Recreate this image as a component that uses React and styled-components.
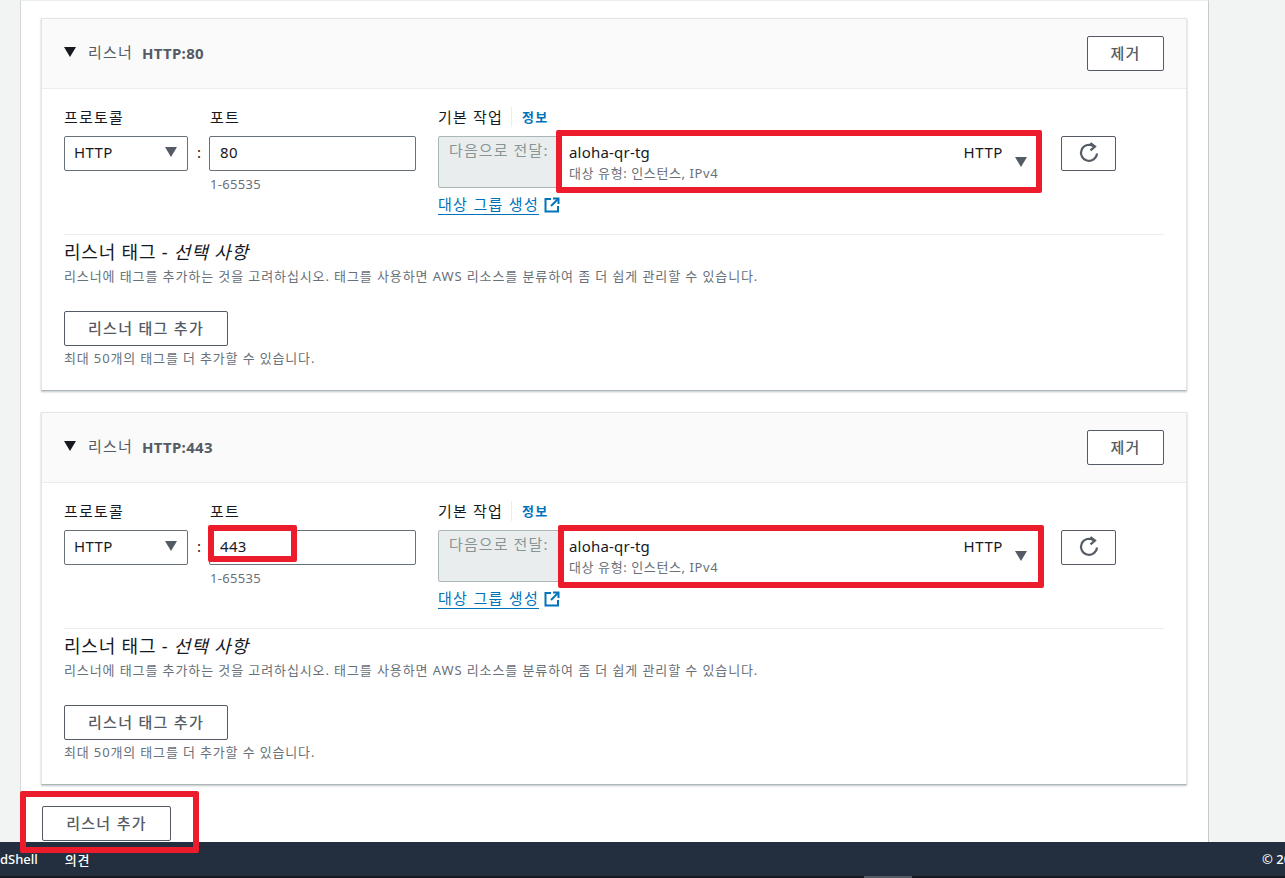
import React from 'react';
import styled, { createGlobalStyle } from 'styled-components';

const GlobalStyle = createGlobalStyle`
  html, body {
    margin: 0;
    padding: 0;
    background: #f2f3f3;
    overflow: hidden;
  }
  body {
    font-family: "Noto Sans", "Noto Sans CJK KR", sans-serif;
    font-size: 15px;
    color: #16191f;
  }
`;

const Page = styled.div`
  position: relative;
  width: 1285px;
  height: 878px;
  display: flex;
  flex-direction: column;
  overflow: hidden;
`;

const Panel = styled.main`
  width: 1189px;
  height: 842px;
  box-sizing: border-box;
  margin-left: 20px;
  padding: 17px 20px 0 20px;
  background: #fff;
  border-left: 1px solid #d5d8d8;
  border-right: 1px solid #c6caca;
  border-top: 1px solid #eaeded;
  flex: none;
`;

const Card = styled.section`
  width: 1146px;
  height: 373px;
  box-sizing: border-box;
  margin-bottom: 21px;
  background: #fff;
  border: 1px solid #e4e7e7;
  border-bottom: 1px solid #aab7b8;
  box-shadow: 0 1px 2px rgba(0, 28, 36, 0.25);
  display: flex;
  flex-direction: column;
`;

const CardHeader = styled.header`
  height: 70px;
  flex: none;
  box-sizing: border-box;
  padding: 0 22px;
  background: #fafafa;
  border-bottom: 1px solid #eaeded;
  display: flex;
  align-items: center;
`;

const Caret = styled.span`
  width: 0;
  height: 0;
  border-left: 6px solid transparent;
  border-right: 6px solid transparent;
  border-top: 10px solid ${(p) => p.$color || '#16191f'};
  flex: none;
`;

const HeaderCaret = styled(Caret)`
  position: relative;
  top: -2px;
`;

const HeaderLabel = styled.span`
  margin-left: 12px;
  color: #545b64;
  font-size: 15px;
  letter-spacing: 1.2px;
  position: relative;
  top: -2px;
`;

const HeaderValue = styled.strong`
  margin-left: 9px;
  color: #545b64;
  font-size: 15px;
  font-weight: 700;
  letter-spacing: 0.3px;
  position: relative;
  top: -1px;
`;

const Button = styled.button`
  height: 35px;
  width: ${(p) => p.$width}px;
  box-sizing: border-box;
  padding: 0 0 2px;
  background: #fff;
  border: 1px solid #545b64;
  border-radius: 2px;
  color: #545b64;
  font-family: inherit;
  font-size: 15px;
  font-weight: 500;
  letter-spacing: 1.3px;
  display: flex;
  align-items: center;
  justify-content: center;
  flex: none;
`;

const RemoveButton = styled(Button)`
  margin-left: auto;
`;

const AddListenerButton = styled(Button)`
  margin-left: 1px;
`;

const CardBody = styled.div`
  flex: 1;
  padding: 18px 22px 0;
`;

const FormRow = styled.div`
  height: 128px;
  box-sizing: border-box;
  display: flex;
  align-items: flex-start;
  border-bottom: 1px solid #eaeded;
`;

const Field = styled.div`
  width: ${(p) => p.$width}px;
  flex: none;
  margin-right: ${(p) => p.$gap || 0}px;
`;

const FieldLabel = styled.div`
  height: 20px;
  line-height: 20px;
  margin-bottom: 9px;
  padding-left: ${(p) => p.$indent || 0}px;
  font-size: 15px;
  letter-spacing: 1.2px;
  color: #16191f;
  display: flex;
  align-items: center;
`;

const InfoLink = styled.span`
  margin-left: 8px;
  padding-left: 10px;
  border-left: 1px solid #eaeded;
  color: #0073bb;
  font-size: 13px;
  font-weight: 700;
  letter-spacing: 1.2px;
`;

const SelectBox = styled.div`
  height: 35px;
  box-sizing: border-box;
  padding: 0 10px 3px 9px;
  border: 1px solid #687078;
  border-radius: 2px;
  display: flex;
  align-items: center;
  justify-content: space-between;
  font-size: 15px;
  letter-spacing: 0.4px;
`;

const Colon = styled.div`
  width: 21px;
  flex: none;
  margin-top: 29px;
  height: 35px;
  line-height: 33px;
  padding-left: 1px;
  box-sizing: border-box;
  text-align: center;
`;

const PortInput = styled.div`
  height: 35px;
  box-sizing: border-box;
  padding-left: 10px;
  border: 1px solid #687078;
  border-radius: 2px;
  line-height: 31px;
  font-size: 15px;
  letter-spacing: 0.3px;
  position: relative;
`;

const Hint = styled.div`
  margin-top: ${(p) => p.$top || 5}px;
  padding-left: ${(p) => p.$indent || 0}px;
  font-size: 13px;
  line-height: 16px;
  letter-spacing: ${(p) => p.$spacing || 0.3}px;
  color: #687078;
`;

const ActionRow = styled.div`
  display: flex;
  position: relative;
`;

const ForwardLabel = styled.div`
  width: 122px;
  height: 52px;
  box-sizing: border-box;
  padding: 1px 0 0 10px;
  background: #eaeded;
  border: 1px solid #aab7b8;
  border-radius: 2px 0 0 2px;
  color: #879596;
  font-size: 15px;
  letter-spacing: 1.1px;
  line-height: 24px;
  white-space: nowrap;
  flex: none;
  overflow: hidden;
`;

const TargetSelect = styled.div`
  width: 472px;
  height: 52px;
  box-sizing: border-box;
  padding: 4px 5px 0 9px;
  display: flex;
  align-items: flex-start;
  flex: none;
`;

const TargetText = styled.div`
  flex: 1;
`;

const TargetName = styled.div`
  line-height: 24px;
  font-size: 15px;
  letter-spacing: 0.2px;
`;

const TargetMeta = styled.div`
  line-height: 16px;
  margin-top: 1px;
  font-size: 13px;
  letter-spacing: 0.6px;
  color: #687078;
`;

const TargetProtocol = styled.div`
  line-height: 24px;
  margin-right: 12px;
  font-size: 15px;
  letter-spacing: 0.6px;
`;

const TargetCaret = styled(Caret)`
  margin-top: 17px;
`;

const CreateLink = styled.div`
  margin-top: 6px;
  display: flex;
  align-items: center;
  color: #0073bb;
  font-size: 15px;
  letter-spacing: 1.3px;
  line-height: 20px;
`;

const LinkText = styled.span`
  border-bottom: 1px solid #0073bb;
  margin-right: 5px;
`;

const RefreshWrap = styled.div`
  margin-top: 29px;
  margin-left: 19px;
`;

const TagTitle = styled.h3`
  margin: 6px 0 0;
  font-size: 18px;
  line-height: 22px;
  font-weight: 400;
  letter-spacing: 0.8px;
  color: #16191f;

  em {
    font-style: italic;
  }
`;

const TagDescription = styled.p`
  margin: 5px 0 0;
  font-size: 13px;
  line-height: 16px;
  letter-spacing: 0.9px;
  color: #687078;
`;

const TagButtonWrap = styled.div`
  margin-top: 27px;
`;

const Highlight = styled.div`
  position: absolute;
  top: ${(p) => p.$top}px;
  left: ${(p) => p.$left}px;
  width: ${(p) => p.$width}px;
  height: ${(p) => p.$height}px;
  box-sizing: border-box;
  border: 6px solid #ec1c2c;
  border-radius: 2px;
  z-index: 2;
  pointer-events: none;
`;

const Footer = styled.footer`
  height: 34px;
  flex: none;
  background: #232f3e;
  color: #fff;
  font-size: 13px;
  font-weight: 500;
  display: flex;
  align-items: center;
  white-space: nowrap;
  overflow: hidden;
`;

const FooterFeedback = styled.span`
  margin-left: 27px;
  letter-spacing: 0.6px;
`;

const FooterCopy = styled.span`
  margin-left: auto;
  width: 23px;
  overflow: hidden;
`;

const BottomStrip = styled.div`
  height: 2px;
  flex: none;
  background: #16191f;
  padding-left: 864px;
`;

const ScrollThumb = styled.div`
  width: 48px;
  height: 2px;
  background: #545b64;
`;

const RefreshIcon = () => (
  <svg width="22" height="22" viewBox="0 0 22 22" fill="none" stroke="#545b64" strokeWidth="2.2">
    <path d="M15.8 4.4A8 8 0 1 0 19 11.5" />
    <path d="M12.5 1 L17 4.6 L12.5 8.4" />
  </svg>
);

const ExternalIcon = () => (
  <svg width="16" height="16" viewBox="0 0 16 16" fill="none" stroke="#0073bb" strokeWidth="2">
    <path d="M7 2H1.5v12.5H14V9" />
    <path d="M9 1.5h5.5V7" />
    <path d="M14 2L7 9" />
  </svg>
);

const Listener = ({ port, highlightPort, actionHighlight }) => (
  <Card>
    <CardHeader>
      <HeaderCaret />
      <HeaderLabel>리스너</HeaderLabel>
      <HeaderValue>HTTP:{port}</HeaderValue>
      <RemoveButton $width={77}>제거</RemoveButton>
    </CardHeader>
    <CardBody>
      <FormRow>
        <Field $width={124}>
          <FieldLabel>프로토콜</FieldLabel>
          <SelectBox>
            HTTP
            <Caret $color="#545b64" />
          </SelectBox>
        </Field>
        <Colon>:</Colon>
        <Field $width={207} $gap={22}>
          <FieldLabel $indent={1}>포트</FieldLabel>
          <PortInput>
            {port}
            {highlightPort && <Highlight $top={-6} $left={-2} $width={89} $height={37} />}
          </PortInput>
          <Hint $indent={1}>1-65535</Hint>
        </Field>
        <Field $width={604}>
          <FieldLabel>
            기본 작업
            <InfoLink>정보</InfoLink>
          </FieldLabel>
          <ActionRow>
            <ForwardLabel>다음으로 전달:</ForwardLabel>
            <TargetSelect>
              <TargetText>
                <TargetName>aloha-qr-tg</TargetName>
                <TargetMeta>대상 유형: 인스턴스, IPv4</TargetMeta>
              </TargetText>
              <TargetProtocol>HTTP</TargetProtocol>
              <TargetCaret $color="#545b64" />
            </TargetSelect>
            <Highlight
              $top={actionHighlight.top}
              $left={actionHighlight.left}
              $width={486}
              $height={63}
            />
          </ActionRow>
          <CreateLink>
            <LinkText>대상 그룹 생성</LinkText>
            <ExternalIcon />
          </CreateLink>
        </Field>
        <RefreshWrap>
          <Button $width={55}>
            <RefreshIcon />
          </Button>
        </RefreshWrap>
      </FormRow>
      <TagTitle>
        리스너 태그 - <em>선택 사항</em>
      </TagTitle>
      <TagDescription>
        리스너에 태그를 추가하는 것을 고려하십시오. 태그를 사용하면 AWS 리소스를 분류하여 좀 더 쉽게 관리할 수 있습니다.
      </TagDescription>
      <TagButtonWrap>
        <Button $width={164}>리스너 태그 추가</Button>
      </TagButtonWrap>
      <Hint $top={4} $spacing={0.85}>최대 50개의 태그를 더 추가할 수 있습니다.</Hint>
    </CardBody>
  </Card>
);

const App = () => (
  <Page>
    <GlobalStyle />
    <Panel>
      <Listener port="80" actionHighlight={{ top: -6, left: 118 }} />
      <Listener port="443" highlightPort actionHighlight={{ top: -5, left: 120 }} />
      <AddListenerButton $width={129}>리스너 추가</AddListenerButton>
    </Panel>
    <Highlight $top={791} $left={20} $width={179} $height={62} />
    <Footer>
      dShell
      <FooterFeedback>의견</FooterFeedback>
      <FooterCopy>© 2022</FooterCopy>
    </Footer>
    <BottomStrip>
      <ScrollThumb />
    </BottomStrip>
  </Page>
);

export default App;
